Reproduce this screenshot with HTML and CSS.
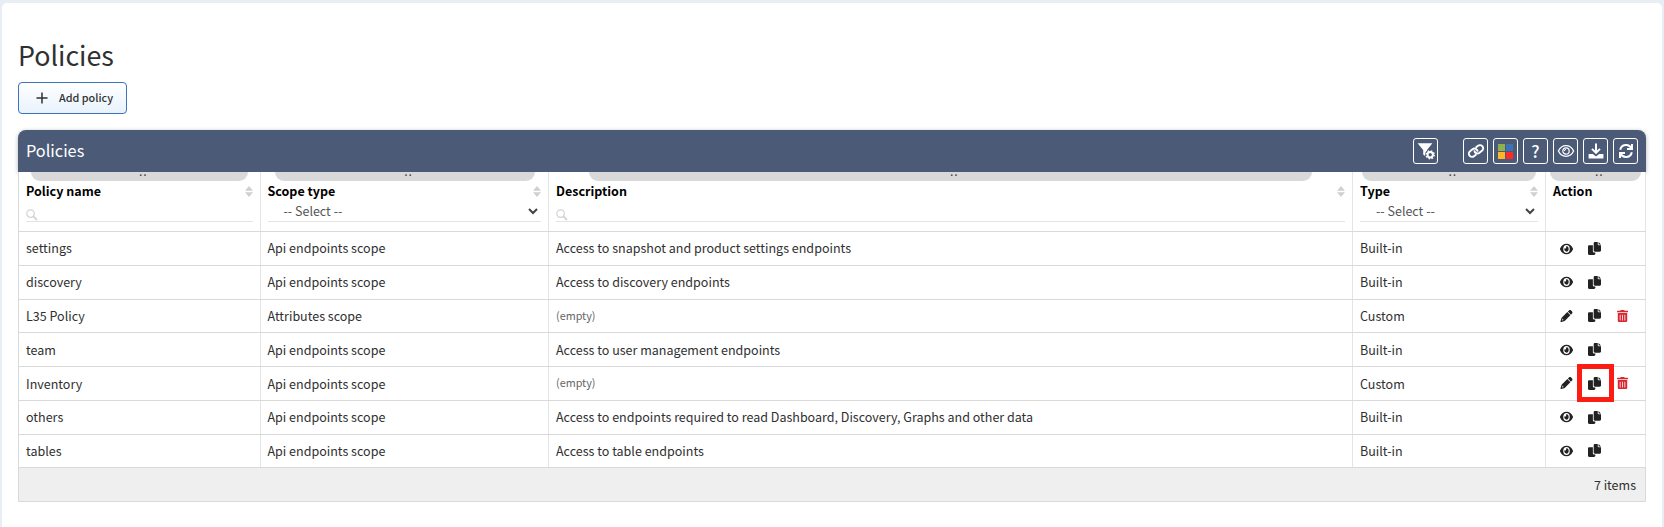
FILE: index.html
```html
<!DOCTYPE html>
<html lang="en">
<head>
<meta charset="utf-8">
<title>Policies</title>
<link rel="stylesheet" href="styles.css">
</head>
<body>
<svg class="defs">
  <symbol id="eye" viewBox="0 0 576 512" preserveAspectRatio="none"><path d="M572.52 241.4C518.29 135.59 410.93 64 288 64S57.68 135.64 3.48 241.41a32.35 32.35 0 0 0 0 29.19C57.71 376.41 165.07 448 288 448s230.32-71.64 284.52-177.41a32.35 32.35 0 0 0 0-29.19zM288 400a144 144 0 1 1 144-144 143.93 143.93 0 0 1-144 144zm0-240a95.31 95.31 0 0 0-25.31 3.79 47.85 47.85 0 0 1-66.9 66.9A95.78 95.78 0 1 0 288 160z"/></symbol>
  <symbol id="copy" viewBox="0 0 512 512"><path d="M384 96V0H272c-26.510 0-48 21.490-48 48v288c0 26.510 21.490 48 48 48h192c26.510 0 48-21.490 48-48V128h-96c-17.600 0-32-14.400-32-32zM416 0v96h96zM192 352V128H48c-26.510 0-48 21.490-48 48v288c0 26.510 21.490 48 48 48h192c26.510 0 48-21.490 48-48v-48h-32c-35.300 0-64-28.700-64-64z"/></symbol>
  <symbol id="trash" viewBox="0 0 448 512" preserveAspectRatio="none"><path d="M32 464a48 48 0 0 0 48 48h288a48 48 0 0 0 48-48V128H32zm272-256a16 16 0 0 1 32 0v224a16 16 0 0 1-32 0zm-96 0a16 16 0 0 1 32 0v224a16 16 0 0 1-32 0zm-96 0a16 16 0 0 1 32 0v224a16 16 0 0 1-32 0zM432 32H312l-9.4-18.7A24 24 0 0 0 281.1 0H166.8a23.72 23.72 0 0 0-21.4 13.3L136 32H16A16 16 0 0 0 0 48v32a16 16 0 0 0 16 16h416a16 16 0 0 0 16-16V48a16 16 0 0 0-16-16z"/></symbol>
  <symbol id="pencil" viewBox="0 0 512 512"><path d="M421.7 220.3L188.5 453.4L154.6 419.5L158.1 416H112C103.2 416 96 408.8 96 400V353.9L92.510 357.4C87.780 362.2 84.310 368 82.420 374.4L59.440 452.6L137.6 429.6C143.1 427.7 149.8 424.2 154.6 419.5L188.5 453.4C178.1 463.8 165.2 471.5 151.1 475.6L30.770 511C22.350 513.5 13.240 511.2 7.030 504.1C.82 498.8-1.5 489.7 .98 481.2L36.370 360.9C40.530 346.8 48.160 333.9 58.570 323.5L291.7 90.340zM492.7 58.750C517.7 83.740 517.7 124.3 492.7 149.3L444.3 197.7L314.3 67.720L362.7 19.320C387.7-5.678 428.3-5.678 453.3 19.320z"/></symbol>
  <symbol id="search" viewBox="0 0 12 12"><circle cx="4.6" cy="4.6" r="3.8" fill="none" stroke="currentColor" stroke-width="1.2"/><path d="M7.4 7.4l3.6 3.6" stroke="currentColor" stroke-width="1.8"/></symbol>
  <symbol id="sort" viewBox="0 0 8 11"><path d="M0 4.700L4 0l4 4.700zM0 6.300h8L4 11z"/></symbol>
  <symbol id="chev" viewBox="0 0 10 7"><path d="M1 1l4 4 4-4" fill="none" stroke="currentColor" stroke-width="2"/></symbol>
</svg>
<main class="page">
  <h1 class="title">Policies</h1>
  <button class="add"><svg class="plus" viewBox="0 0 12 12"><path d="M6 .5v11M.5 6h11" stroke="currentColor" stroke-width="1.5"/></svg><span>Add policy</span></button>
  <section class="panel">
    <header class="bar">
      <h2 class="bar-title">Policies</h2>
      <div class="tools">
        <span class="tool tool-first"><svg viewBox="0 0 18 18"><path fill="currentColor" d="M.6 1.300h14.800L10 8v7.600L6.200 12.600V8z"/><circle cx="13.200" cy="12.800" r="5.200" fill="#4b5b77"/><circle cx="13.200" cy="12.800" r="2.700" fill="none" stroke="currentColor" stroke-width="2"/><circle cx="13.200" cy="12.800" r="4" fill="none" stroke="currentColor" stroke-width="1.400" stroke-dasharray="1.600 1.540"/></svg></span>
        <span class="tool"><svg viewBox="0 0 18 18"><g fill="none" stroke="currentColor" stroke-width="1.900" transform="rotate(-38 9 9)"><path d="M7.300 11.900H4.200a3.200 3.200 0 0 1 0-6.400h3.100a3.200 3.200 0 0 1 2.700 5"/><path d="M10.700 6.100h3.100a3.200 3.200 0 0 1 0 6.400h-3.100a3.200 3.200 0 0 1-2.700-5"/></g></svg></span>
        <span class="tool"><span class="tiles"><i class="t-green"></i><i class="t-blue"></i><i class="t-yellow"></i><i class="t-red"></i></span></span>
        <span class="tool"><span class="q">?</span></span>
        <span class="tool"><svg viewBox="0 0 18 18" fill="none" stroke="currentColor"><path stroke-width="1.3" d="M1.400 9C3 5.600 5.800 3.700 9 3.700S15 5.600 16.600 9C15 12.400 12.200 14.300 9 14.300S3 12.400 1.400 9z"/><circle cx="9" cy="9" r="3.200" stroke-width="1.200"/><path d="M7.400 9A1.600 1.600 0 0 1 9 7.400"/></svg></span>
        <span class="tool"><svg viewBox="0 0 18 18" fill="currentColor"><path d="M8 1.400h2v7l2.300-2.200 1.400 1.400L9 12.200 4.300 7.600l1.400-1.400L8 8.400z"/><path d="M1.600 12h4.200L9 14.400l3.200-2.400h4.200v4.400H1.600z"/></svg></span>
        <span class="tool"><svg viewBox="0 0 18 18" fill="none" stroke="currentColor" stroke-width="2"><path d="M3.200 7.800A6 6 0 0 1 14.400 6.200M14.800 10.200A6 6 0 0 1 3.600 11.800"/><path d="M15 2v5h-5M3 16v-5h5"/></svg></span>
      </div>
    </header>
    <div class="grid head">
      <div class="cell h-name"><span class="grip">..</span><div class="label">Policy name<svg class="sort"><use href="#sort"/></svg></div><div class="filter"><svg class="search"><use href="#search"/></svg></div></div>
      <div class="cell h-scope"><span class="grip">..</span><div class="label">Scope type<svg class="sort"><use href="#sort"/></svg></div><div class="filter select"><span class="value">-- Select --</span><svg class="chev"><use href="#chev"/></svg></div></div>
      <div class="cell h-desc"><span class="grip">..</span><div class="label">Description<svg class="sort"><use href="#sort"/></svg></div><div class="filter"><svg class="search"><use href="#search"/></svg></div></div>
      <div class="cell h-type"><span class="grip">..</span><div class="label">Type<svg class="sort"><use href="#sort"/></svg></div><div class="filter select"><span class="value">-- Select --</span><svg class="chev"><use href="#chev"/></svg></div></div>
      <div class="cell h-act"><span class="grip">..</span><div class="label">Action</div></div>
    </div>
    <div class="grid row"><div class="cell">settings</div><div class="cell">Api endpoints scope</div><div class="cell">Access to snapshot and product settings endpoints</div><div class="cell">Built-in</div><div class="cell acts"><svg class="ic eye"><use href="#eye"/></svg><svg class="ic"><use href="#copy"/></svg></div></div>
    <div class="grid row"><div class="cell">discovery</div><div class="cell">Api endpoints scope</div><div class="cell">Access to discovery endpoints</div><div class="cell">Built-in</div><div class="cell acts up"><svg class="ic eye"><use href="#eye"/></svg><svg class="ic"><use href="#copy"/></svg></div></div>
    <div class="grid row short"><div class="cell">L35 Policy</div><div class="cell">Attributes scope</div><div class="cell empty">(empty)</div><div class="cell">Custom</div><div class="cell acts up"><svg class="ic pencil"><use href="#pencil"/></svg><svg class="ic"><use href="#copy"/></svg><svg class="ic trash"><use href="#trash"/></svg></div></div>
    <div class="grid row low"><div class="cell">team</div><div class="cell">Api endpoints scope</div><div class="cell">Access to user management endpoints</div><div class="cell">Built-in</div><div class="cell acts"><svg class="ic eye"><use href="#eye"/></svg><svg class="ic"><use href="#copy"/></svg></div></div>
    <div class="grid row low"><div class="cell">Inventory</div><div class="cell">Api endpoints scope</div><div class="cell empty">(empty)</div><div class="cell">Custom</div><div class="cell acts up"><svg class="ic pencil"><use href="#pencil"/></svg><span class="marked"><svg class="ic"><use href="#copy"/></svg></span><svg class="ic trash"><use href="#trash"/></svg></div></div>
    <div class="grid row"><div class="cell">others</div><div class="cell">Api endpoints scope</div><div class="cell">Access to endpoints required to read Dashboard, Discovery, Graphs and other data</div><div class="cell">Built-in</div><div class="cell acts up"><svg class="ic eye"><use href="#eye"/></svg><svg class="ic"><use href="#copy"/></svg></div></div>
    <div class="grid row short"><div class="cell">tables</div><div class="cell">Api endpoints scope</div><div class="cell">Access to table endpoints</div><div class="cell">Built-in</div><div class="cell acts up"><svg class="ic eye"><use href="#eye"/></svg><svg class="ic"><use href="#copy"/></svg></div></div>
    <footer class="foot">7 items</footer>
  </section>
</main>
</body>
</html>
```
FILE: styles.css
```css
* { box-sizing: border-box; }
body { margin: 0; height: 527px; padding: 3px 2px 0; overflow: hidden; background: #e9eef4; color: #303030; font-family: "Noto Sans CJK SC", "Noto Sans", sans-serif; font-size: 12.53px; }
.defs { display: none; }
.page { height: 524px; padding: 31px 16px 0; background: #fff; border-radius: 5px 5px 0 0; }
.title { margin: 0; height: 48px; font-size: 26.8px; font-weight: 400; line-height: 42px; }
.add { display: flex; align-items: center; gap: 11px; width: 109px; height: 32px; padding: 0 0 1px 17px; border: 1px solid #3c73b9; border-radius: 4px; background: linear-gradient(#fff, #e8f2fd); color: #303030; font: 500 10.8px "Noto Sans CJK SC", sans-serif; white-space: nowrap; }
.add span { padding-bottom: 1px; }
.plus { width: 12px; height: 12px; flex: none; }
.panel { margin-top: 16px; width: 1628px; }
.bar { display: flex; align-items: center; justify-content: space-between; height: 42px; padding: 0 8px; border-radius: 8px 8px 0 0; background: #4b5b77; color: #fff; box-shadow: 0 1px 4px rgba(0, 0, 0, .3); }
.bar-title { margin: 0; padding-bottom: 2px; font-size: 16.3px; font-weight: 400; }
.tools { display: flex; gap: 5px; }
.tool { display: flex; align-items: center; justify-content: center; width: 25px; height: 26px; border: 1px solid #fff; border-radius: 3px; }
.tool svg { width: 18px; height: 18px; }
.tool-first { margin-right: 20px; }
.tiles { display: grid; grid-template-columns: 7px 7px; grid-auto-rows: 7px; gap: 1px; }
.t-green { background: #8fb04f; }
.t-blue { background: #3d73b5; }
.t-yellow { background: #fdb52a; }
.t-red { background: #fb2b2b; }
.q { font-size: 17px; font-weight: 500; line-height: 24px; }
.grid { display: grid; grid-template-columns: 242px 288px 804px 193px 100px; border-left: 1px solid #d9d9d9; border-bottom: 1px solid #d9d9d9; background: #fff; position: relative; }
.cell { padding: 0 7px; border-right: 1px solid #e4e4e4; white-space: nowrap; }
.cell:nth-child(2) { padding-left: 6.5px; }
.head { height: 60px; }
.head .cell { display: grid; grid-template-rows: 9px 20px 21px; }
.grip { height: 9px; padding-left: 8px; border-radius: 0 0 9px 9px; background: #d9d9d9; text-align: center; color: #444; font-size: 9px; font-weight: 700; letter-spacing: 1.4px; line-height: 2px; }
.h-name .grip { margin: 0 5px; }
.h-scope .grip { margin: 0 6px 0 7px; }
.h-desc .grip { margin: 0 33px; }
.h-type .grip { margin: 0 2px; }
.h-act .grip { margin: 0 -3px; }
.label { display: flex; align-items: center; justify-content: space-between; color: #000; font-weight: 700; line-height: 20px; }
.sort { width: 8px; height: 11px; margin-top: 1px; fill: #d0d0d0; }
.filter { display: flex; align-items: center; border-bottom: 1px solid #e4e4e4; }
.select { justify-content: space-between; padding: 0 3px 0 16px; color: #555; }
.value { line-height: 18px; padding-bottom: 1px; }
.search { width: 12px; height: 12px; margin-top: 8px; color: #d4d4d4; }
.chev { width: 10px; height: 7px; color: #444; }
.row { height: 34px; line-height: 32px; }
.low { line-height: 33px; }
.short { height: 33px; }
.empty { font-size: 10.8px; line-height: 31px; color: #666; }
.acts { display: flex; align-items: center; gap: 15px; padding-left: 14px; }
.up { padding-bottom: 1px; }
.ic { width: 13px; height: 13px; fill: #222; flex: none; }
.eye { height: 14px; }
.pencil { height: 12px; }
.trash { width: 11px; height: 12px; margin-left: 1px; fill: #d9262f; }
.marked { display: flex; align-items: center; justify-content: center; flex: none; width: 37px; height: 38px; margin: -3px -13px -3px -11px; padding-right: 2px; border: 5px solid #fb1d13; position: relative; z-index: 2; }
.foot { height: 34px; padding: 0 9px; border: 1px solid #d9d9d9; border-top: 0; background: #efefef; text-align: right; line-height: 33px; }
```
